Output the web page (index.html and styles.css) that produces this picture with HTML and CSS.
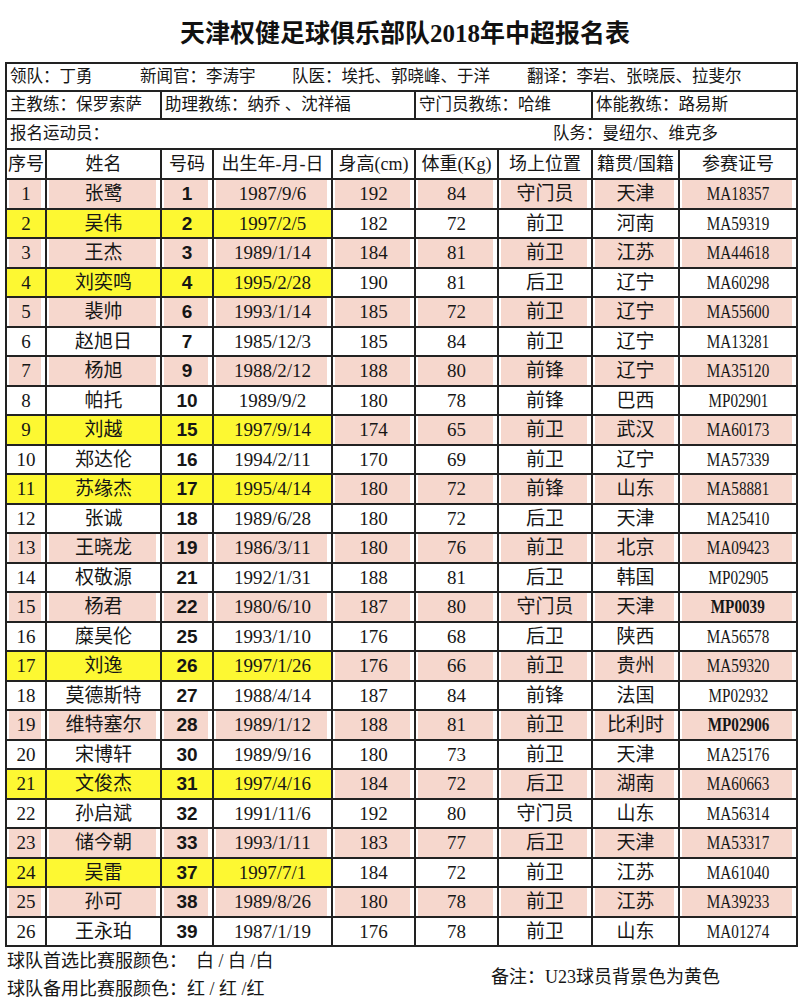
FILE: index.html
```html
<!DOCTYPE html>
<html lang="zh">
<head>
<meta charset="utf-8">
<title>天津权健足球俱乐部队2018年中超报名表</title>
<link rel="stylesheet" href="styles.css">
</head>
<body>
<div class="title">天津权健足球俱乐部队2018年中超报名表</div>
<table class="sheet">
  <colgroup>
    <col class="c1"><col class="c2"><col class="c3"><col class="c4"><col class="c5"><col class="c6"><col class="c7"><col class="c8"><col class="c9">
  </colgroup>
  <tr class="info r1">
    <td colspan="9">
      <div class="staff">
        <span class="s1">领队：丁勇</span>
        <span class="s2">新闻官：李涛宇</span>
        <span class="s3">队医：埃托、郭晓峰、于洋</span>
        <span class="s4">翻译：李岩、张晓辰、拉斐尔</span>
      </div>
    </td>
  </tr>
  <tr class="info r2">
    <td colspan="2">主教练：保罗索萨</td>
    <td colspan="3">助理教练：纳乔 、沈祥福</td>
    <td colspan="2">守门员教练：哈维</td>
    <td colspan="2">体能教练：路易斯</td>
  </tr>
  <tr class="info r3">
    <td colspan="9">
      <div class="reg">
        <span class="reg-l">报名运动员：</span>
        <span class="reg-r">队务：曼纽尔、维克多</span>
      </div>
    </td>
  </tr>
  <tr class="head">
    <td>序号</td><td>姓名</td><td>号码</td><td>出生年-月-日</td><td>身高(cm)</td><td>体重(Kg)</td><td>场上位置</td><td>籍贯/国籍</td><td>参赛证号</td>
  </tr>
  <tr class="odd"><td>1</td><td class="nm">张鹭</td><td class="no">1</td><td class="dt">1987/9/6</td><td>192</td><td>84</td><td class="cn">守门员</td><td class="cn">天津</td><td><span class="id">MA18357</span></td></tr>
  <tr class="u23"><td>2</td><td class="nm">吴伟</td><td class="no">2</td><td class="dt">1997/2/5</td><td>182</td><td>72</td><td class="cn">前卫</td><td class="cn">河南</td><td><span class="id">MA59319</span></td></tr>
  <tr class="odd"><td>3</td><td class="nm">王杰</td><td class="no">3</td><td class="dt">1989/1/14</td><td>184</td><td>81</td><td class="cn">前卫</td><td class="cn">江苏</td><td><span class="id">MA44618</span></td></tr>
  <tr class="u23"><td>4</td><td class="nm">刘奕鸣</td><td class="no">4</td><td class="dt">1995/2/28</td><td>190</td><td>81</td><td class="cn">后卫</td><td class="cn">辽宁</td><td><span class="id">MA60298</span></td></tr>
  <tr class="odd"><td>5</td><td class="nm">裴帅</td><td class="no">6</td><td class="dt">1993/1/14</td><td>185</td><td>72</td><td class="cn">前卫</td><td class="cn">辽宁</td><td><span class="id">MA55600</span></td></tr>
  <tr><td>6</td><td class="nm">赵旭日</td><td class="no">7</td><td class="dt">1985/12/3</td><td>185</td><td>84</td><td class="cn">前卫</td><td class="cn">辽宁</td><td><span class="id">MA13281</span></td></tr>
  <tr class="odd"><td>7</td><td class="nm">杨旭</td><td class="no">9</td><td class="dt">1988/2/12</td><td>188</td><td>80</td><td class="cn">前锋</td><td class="cn">辽宁</td><td><span class="id">MA35120</span></td></tr>
  <tr><td>8</td><td class="nm">帕托</td><td class="no">10</td><td class="dt">1989/9/2</td><td>180</td><td>78</td><td class="cn">前锋</td><td class="cn">巴西</td><td><span class="id">MP02901</span></td></tr>
  <tr class="odd u23"><td>9</td><td class="nm">刘越</td><td class="no">15</td><td class="dt">1997/9/14</td><td>174</td><td>65</td><td class="cn">前卫</td><td class="cn">武汉</td><td><span class="id">MA60173</span></td></tr>
  <tr><td>10</td><td class="nm">郑达伦</td><td class="no">16</td><td class="dt">1994/2/11</td><td>170</td><td>69</td><td class="cn">前卫</td><td class="cn">辽宁</td><td><span class="id">MA57339</span></td></tr>
  <tr class="odd u23"><td>11</td><td class="nm">苏缘杰</td><td class="no">17</td><td class="dt">1995/4/14</td><td>180</td><td>72</td><td class="cn">前锋</td><td class="cn">山东</td><td><span class="id">MA58881</span></td></tr>
  <tr><td>12</td><td class="nm">张诚</td><td class="no">18</td><td class="dt">1989/6/28</td><td>180</td><td>72</td><td class="cn">后卫</td><td class="cn">天津</td><td><span class="id">MA25410</span></td></tr>
  <tr class="odd"><td>13</td><td class="nm">王晓龙</td><td class="no">19</td><td class="dt">1986/3/11</td><td>180</td><td>76</td><td class="cn">前卫</td><td class="cn">北京</td><td><span class="id">MA09423</span></td></tr>
  <tr><td>14</td><td class="nm">权敬源</td><td class="no">21</td><td class="dt">1992/1/31</td><td>188</td><td>81</td><td class="cn">后卫</td><td class="cn">韩国</td><td><span class="id">MP02905</span></td></tr>
  <tr class="odd"><td>15</td><td class="nm">杨君</td><td class="no">22</td><td class="dt">1980/6/10</td><td>187</td><td>80</td><td class="cn">守门员</td><td class="cn">天津</td><td><span class="id semi">MP0039</span></td></tr>
  <tr><td>16</td><td class="nm">糜昊伦</td><td class="no">25</td><td class="dt">1993/1/10</td><td>176</td><td>68</td><td class="cn">后卫</td><td class="cn">陕西</td><td><span class="id">MA56578</span></td></tr>
  <tr class="odd u23"><td>17</td><td class="nm">刘逸</td><td class="no">26</td><td class="dt">1997/1/26</td><td>176</td><td>66</td><td class="cn">前卫</td><td class="cn">贵州</td><td><span class="id">MA59320</span></td></tr>
  <tr><td>18</td><td class="nm">莫德斯特</td><td class="no">27</td><td class="dt">1988/4/14</td><td>187</td><td>84</td><td class="cn">前锋</td><td class="cn">法国</td><td><span class="id">MP02932</span></td></tr>
  <tr class="odd"><td>19</td><td class="nm">维特塞尔</td><td class="no">28</td><td class="dt">1989/1/12</td><td>188</td><td>81</td><td class="cn">前卫</td><td class="cn">比利时</td><td><span class="id semi">MP02906</span></td></tr>
  <tr><td>20</td><td class="nm">宋博轩</td><td class="no">30</td><td class="dt">1989/9/16</td><td>180</td><td>73</td><td class="cn">前卫</td><td class="cn">天津</td><td><span class="id">MA25176</span></td></tr>
  <tr class="odd u23"><td>21</td><td class="nm">文俊杰</td><td class="no">31</td><td class="dt">1997/4/16</td><td>184</td><td>72</td><td class="cn">后卫</td><td class="cn">湖南</td><td><span class="id">MA60663</span></td></tr>
  <tr><td>22</td><td class="nm">孙启斌</td><td class="no">32</td><td class="dt">1991/11/6</td><td>192</td><td>80</td><td class="cn">守门员</td><td class="cn">山东</td><td><span class="id">MA56314</span></td></tr>
  <tr class="odd"><td>23</td><td class="nm">储今朝</td><td class="no">33</td><td class="dt">1993/1/11</td><td>183</td><td>77</td><td class="cn">后卫</td><td class="cn">天津</td><td><span class="id">MA53317</span></td></tr>
  <tr class="u23"><td>24</td><td class="nm">吴雷</td><td class="no">37</td><td class="dt">1997/7/1</td><td>184</td><td>72</td><td class="cn">前卫</td><td class="cn">江苏</td><td><span class="id">MA61040</span></td></tr>
  <tr class="odd"><td>25</td><td class="nm">孙可</td><td class="no">38</td><td class="dt">1989/8/26</td><td>180</td><td>78</td><td class="cn">前卫</td><td class="cn">江苏</td><td><span class="id">MA39233</span></td></tr>
  <tr><td>26</td><td class="nm">王永珀</td><td class="no">39</td><td class="dt">1987/1/19</td><td>176</td><td>78</td><td class="cn">前卫</td><td class="cn">山东</td><td><span class="id">MA01274</span></td></tr>
</table>
<div class="foot">
  <div class="kits">
    <div class="kit">球队首选比赛服颜色：&nbsp; 白 / 白 /白</div>
    <div class="kit">球队备用比赛服颜色：红 / 红 /红</div>
  </div>
  <div class="note">备注：U23球员背景色为黄色</div>
</div>
</body>
</html>
```

FILE: styles.css
```css
html, body {
  margin: 0;
  padding: 0;
  background: #ffffff;
}

body {
  width: 800px;
  font-family: "Liberation Serif", "Noto Sans CJK SC", serif;
  color: #161616;
}

.title {
  height: 62px;
  display: flex;
  align-items: center;
  justify-content: center;
  padding-left: 10px;
  box-sizing: border-box;
  font-family: "Liberation Serif", "Noto Sans CJK SC", serif;
  font-size: 25px;
  font-weight: bold;
  color: #111;
}

.sheet {
  border-collapse: collapse;
  table-layout: fixed;
  width: 791px;
  margin-left: 5px;
}

.c1 { width: 40px; }
.c2 { width: 115px; }
.c3 { width: 52px; }
.c4 { width: 119px; }
.c5 { width: 83px; }
.c6 { width: 83px; }
.c7 { width: 94px; }
.c8 { width: 87px; }
.c9 { width: 118px; }

.sheet td {
  border: 2px solid #222;
  padding: 0;
  text-align: center;
  vertical-align: middle;
  font-size: 19px;
  line-height: 1;
  white-space: nowrap;
  overflow: hidden;
}

.info td {
  text-align: left;
  padding-left: 3px;
  font-size: 16.5px;
  font-family: "Liberation Serif", "Noto Sans CJK SC", serif;
}

.r1 { height: 28px; }
.r2 { height: 28px; }
.r3 { height: 30px; }

.staff {
  display: flex;
}
.s1 { width: 130px; }
.s2 { width: 152px; }
.s3 { width: 235px; }

.reg {
  display: flex;
}
.reg-l { width: 543px; }

.head { height: 30px; }
.head td { font-size: 18px; }

.sheet tr:not(.info):not(.head) { height: 29.5px; }

.nm, .cn { font-size: 17.5px; }
.dt { font-size: 20px; }
.no {
  font-family: "Liberation Sans", "Noto Sans CJK SC", sans-serif;
  font-weight: bold;
  font-size: 17px;
}

.id {
  display: inline-block;
  font-size: 19px;
  transform: scaleX(0.8);
}

.semi { font-weight: 600; }

.odd td {
  background: #f6d7cd;
  box-shadow: inset 2px 0 0 #ffffff, inset -4px 0 0 #ffffff;
}

.u23 td:nth-child(-n+4) {
  background: #fdf832;
  box-shadow: none;
}

.foot {
  display: flex;
  align-items: center;
  padding-left: 7px;
}

.kits {
  width: 484px;
  flex: none;
}

.kit {
  height: 28px;
  line-height: 28px;
  font-size: 18px;
  white-space: nowrap;
}

.note {
  font-size: 18px;
  white-space: nowrap;
}
```
